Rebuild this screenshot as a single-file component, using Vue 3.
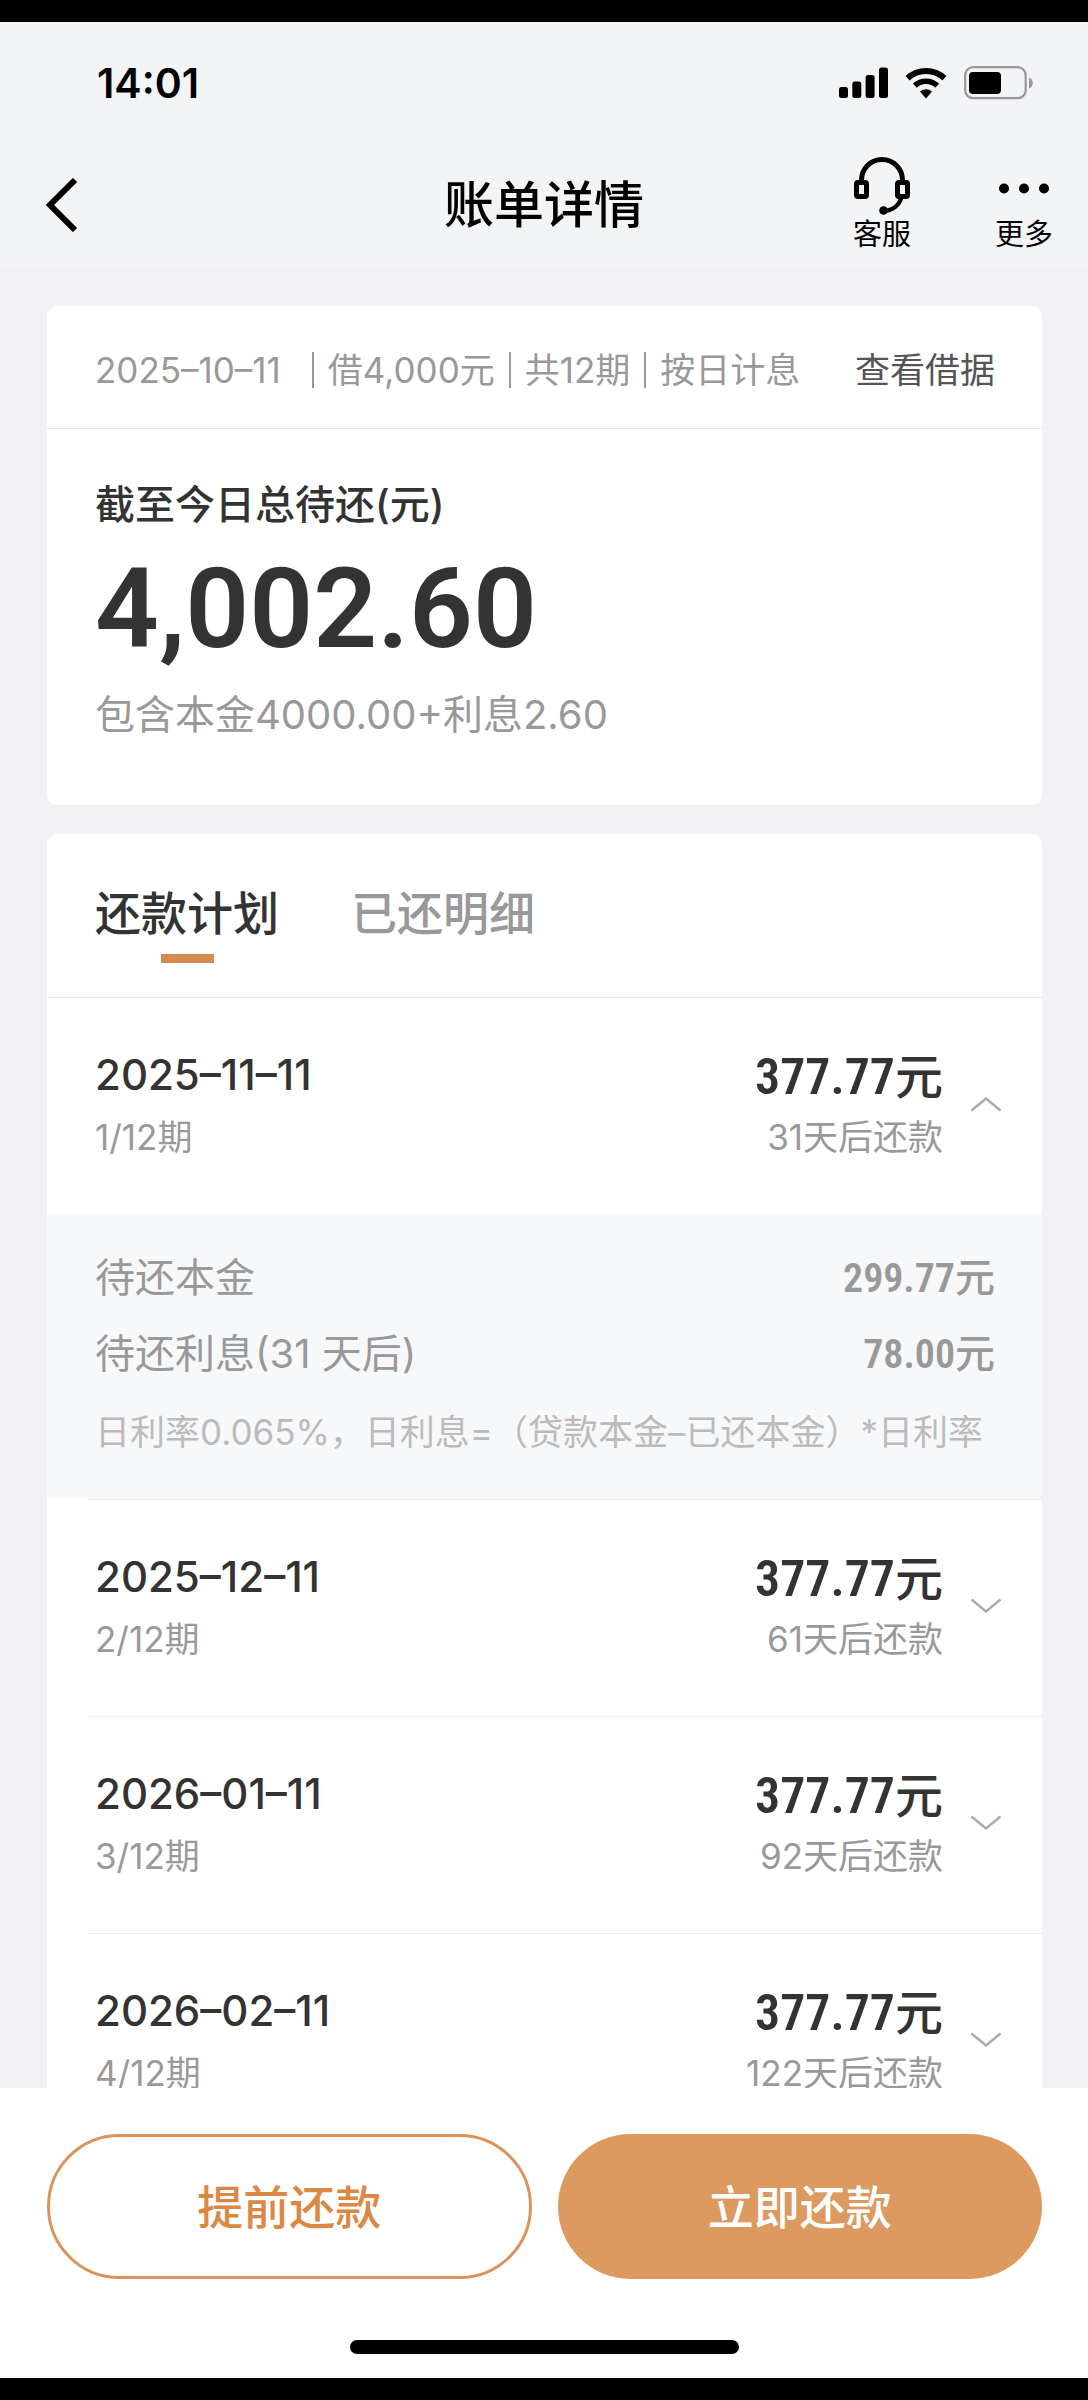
<script setup>
import { ref } from 'vue'

const tabs = ['还款计划', '已还明细']
const activeTab = ref(0)

const plans = ref([
  {
    date: '2025–11–11', term: '1/12期', amount: '377.77', due: '31天后还款', open: true,
    detail: {
      items: [
        { label: '待还本金', amount: '299.77' },
        { label: '待还利息(31 天后)', amount: '78.00' },
      ],
      note: '日利率0.065%，日利息=（贷款本金–已还本金）*日利率',
    },
  },
  { date: '2025–12–11', term: '2/12期', amount: '377.77', due: '61天后还款', open: false },
  { date: '2026–01–11', term: '3/12期', amount: '377.77', due: '92天后还款', open: false },
  { date: '2026–02–11', term: '4/12期', amount: '377.77', due: '122天后还款', open: false },
])
</script>

<template>
  <div class="screen">
    <header class="top">
      <div class="status">
        <span class="time">14:01</span>
        <div class="status-icons">
          <svg width="49" height="32" viewBox="0 0 49 32" aria-hidden="true">
            <rect x="0" y="20" width="9" height="11" rx="2.5" />
            <rect x="13.3" y="14.5" width="9" height="16.5" rx="2.5" />
            <rect x="26.6" y="8" width="9" height="23" rx="2.5" />
            <rect x="40" y="0.5" width="9" height="30.5" rx="2.5" />
          </svg>
          <svg width="42" height="32" viewBox="0 0 42 32" aria-hidden="true">
            <path d="M2.6 11.2a27 27 0 0 1 36.800 0" fill="none" stroke="#000" stroke-width="6" />
            <path d="M9.800 18.600a16.500 16.500 0 0 1 22.400 0" fill="none" stroke="#000" stroke-width="5.600" />
            <path d="M15 24.500a9.500 9.500 0 0 1 12 0L21 31.500z" />
          </svg>
          <svg width="70" height="34" viewBox="0 0 70 34" aria-hidden="true">
            <rect x="1.200" y="1.200" width="60.500" height="31" rx="8" fill="none" stroke="#98989a" stroke-width="2.200" />
            <rect x="5" y="6" width="32" height="22" rx="4" />
            <path d="M65 11.500c5 1.500 5 9.500 0 11z" fill="#98989a" />
          </svg>
        </div>
      </div>
      <nav class="nav">
        <button class="back" type="button" aria-label="返回">
          <svg width="32" height="54" viewBox="0 0 32 54" aria-hidden="true">
            <path d="M29 2 4 27l25 25" fill="none" stroke="#000" stroke-width="6" />
          </svg>
        </button>
        <h1>账单详情</h1>
        <div class="tools">
          <button class="tool" type="button">
            <svg width="58" height="58" viewBox="0 0 58 58" fill="none" stroke="#000" stroke-width="5" aria-hidden="true">
              <path d="M8.500 25v-2a20.500 20.500 0 0 1 41 0v2" />
              <rect x="3.500" y="25.500" width="10" height="14" rx="1.500" />
              <rect x="44.500" y="25.500" width="10" height="14" rx="1.500" />
              <path d="M48.500 40c-2 7.500-8 13.500-18 14" stroke-width="4.500" />
              <circle cx="30.500" cy="53.500" r="4.300" fill="#000" stroke="none" />
            </svg>
            <span>客服</span>
          </button>
          <button class="tool" type="button">
            <svg width="58" height="58" viewBox="0 0 58 58" aria-hidden="true">
              <circle cx="9" cy="31.500" r="5" />
              <circle cx="29" cy="31.500" r="5" />
              <circle cx="49" cy="31.500" r="5" />
            </svg>
            <span>更多</span>
          </button>
        </div>
      </nav>
    </header>

    <main class="content">
      <section class="card">
        <div class="loan">
          <p class="loan-meta">
            <span class="loan-date">2025–10–11</span><i></i><span>借4,000元</span><i></i><span>共12期</span><i></i><span>按日计息</span>
          </p>
          <a href="#">查看借据</a>
        </div>
        <div class="summary">
          <h2>截至今日总待还(元)</h2>
          <p class="total">4,002.60</p>
          <p class="parts">包含本金4000.00+利息2.60</p>
        </div>
      </section>

      <section class="card">
        <div class="tabs" role="tablist">
          <button
            v-for="(tab, i) in tabs"
            :key="tab"
            type="button"
            role="tab"
            class="tab"
            :class="{ active: activeTab === i }"
            :aria-selected="activeTab === i"
            @click="activeTab = i"
          >{{ tab }}</button>
        </div>
        <ul class="plans">
          <li v-for="plan in plans" :key="plan.date">
            <button class="plan" type="button" :aria-expanded="plan.open" @click="plan.open = !plan.open">
              <span class="col">
                <span class="date">{{ plan.date }}</span>
                <span class="sub">{{ plan.term }}</span>
              </span>
              <span class="col end">
                <span class="money"><b>{{ plan.amount }}</b>元</span>
                <span class="sub">{{ plan.due }}</span>
              </span>
              <svg class="chevron" :class="{ up: plan.open }" width="32" height="16" viewBox="0 0 32 16" aria-hidden="true">
                <path d="M1.500 1.500 16 13.500l14.500-12" fill="none" stroke="#aaa" stroke-width="2.400" />
              </svg>
            </button>
            <div v-if="plan.open && plan.detail" class="detail">
              <div v-for="item in plan.detail.items" :key="item.label" class="item">
                <span>{{ item.label }}</span>
                <span class="item-money"><b>{{ item.amount }}</b>元</span>
              </div>
              <p class="note">{{ plan.detail.note }}</p>
            </div>
          </li>
        </ul>
      </section>
    </main>

    <footer class="actions">
      <div class="buttons">
        <button class="btn outline" type="button">提前还款</button>
        <button class="btn solid" type="button">立即还款</button>
      </div>
      <div class="home"></div>
    </footer>
  </div>
</template>

<style>
body {
  margin: 0;
  background: #000;
}
</style>

<style scoped>
.screen {
  box-sizing: border-box;
  display: flex;
  flex-direction: column;
  height: 100vh;
  border-top: 22px solid #000;
  border-bottom: 22px solid #000;
  background: #f2f2f5;
  color: #333;
  font-family: Inter, "Noto Sans CJK SC", sans-serif;
}

h1, h2, p, ul {
  margin: 0;
  padding: 0;
}

button {
  margin: 0;
  padding: 0;
  border: 0;
  background: none;
  color: inherit;
  font: inherit;
  cursor: pointer;
}

svg {
  display: block;
  flex: none;
}

.top {
  flex: none;
  background: #f3f4f6;
  color: #000;
}

.status {
  display: flex;
  align-items: center;
  justify-content: space-between;
  height: 121px;
  padding: 0 54px 0 97px;
}

.time {
  font-size: 41px;
  font-weight: 600;
  line-height: 48px;
}

.status-icons {
  display: flex;
  align-items: center;
  gap: 17px;
}

.nav {
  display: grid;
  grid-template-columns: 1fr auto 1fr;
  align-items: center;
  height: 123px;
  padding: 0 35px;
}

.back {
  justify-self: start;
  margin-left: 11px;
}

h1 {
  font-size: 50px;
  font-weight: 500;
  line-height: 64px;
}

.tools {
  display: flex;
  justify-content: flex-end;
  gap: 84px;
}

.tool {
  display: flex;
  flex-direction: column;
  align-items: center;
  gap: 2px;
  font-size: 29px;
  line-height: 36px;
}

.content {
  flex: 1;
  min-height: 0;
  overflow: hidden;
  padding: 40px 46px 0 47px;
}

.card {
  overflow: hidden;
  border-radius: 10px;
  background: #fff;
}

.card + .card {
  margin-top: 29px;
}

.loan {
  box-sizing: border-box;
  display: flex;
  align-items: center;
  justify-content: space-between;
  height: 123px;
  padding: 5px 47px 0 48px;
  border-bottom: 1px solid #e6e6e6;
  font-size: 35px;
  line-height: 48px;
}

.loan-meta {
  display: flex;
  align-items: center;
  gap: 14px;
  color: #999;
}

.loan-date {
  margin-right: 17px;
}

.loan-meta i {
  width: 2px;
  height: 36px;
  background: #999;
}

.loan a {
  color: #555;
  text-decoration: none;
}

.summary {
  padding: 48px 48px 62px;
}

h2 {
  font-size: 40px;
  font-weight: 500;
  line-height: 56px;
}

.total {
  margin: 16px 0 18px;
  font-family: Roboto, sans-serif;
  font-size: 112px;
  font-weight: 600;
  line-height: 120px;
}

.parts {
  color: #999;
  font-size: 40px;
  line-height: 56px;
}

.tabs {
  display: flex;
  gap: 72px;
  padding: 49px 48px 34px;
  border-bottom: 1px solid #e8e8e8;
}

.tab {
  display: flex;
  flex-direction: column;
  align-items: center;
  color: #999;
  font-size: 46px;
  font-weight: 500;
  line-height: 60px;
}

.tab::after {
  content: "";
  width: 53px;
  height: 9px;
  margin-top: 11px;
}

.tab.active {
  color: #333;
}

.tab.active::after {
  background: #d58a52;
}

.plans {
  list-style: none;
}

.plan {
  display: flex;
  align-items: center;
  width: 100%;
  padding: 48px 40px 53px 48px;
}

.plans li + li .plan {
  width: calc(100% - 41px);
  margin-left: 41px;
  padding-left: 7px;
  border-top: 1px solid #ececee;
}

.col {
  display: flex;
  flex-direction: column;
  gap: 5px;
  text-align: left;
}

.end {
  margin-left: auto;
  text-align: right;
}

.date {
  margin-bottom: 4px;
  font-size: 42px;
  font-weight: 500;
  line-height: 58px;
}

.sub {
  color: #999;
  font-size: 35px;
  line-height: 48px;
}

.money {
  font-size: 48px;
  font-weight: 500;
  line-height: 62px;
}

.money b,
.item-money b {
  font-family: "Roboto Condensed", Roboto, sans-serif;
  font-weight: 600;
}

.money b {
  font-size: 50px;
}

.chevron {
  margin-left: 27px;
}

.chevron.up {
  transform: rotate(180deg);
}

.detail {
  padding: 36px 47px 43px 48px;
  background: #f7f8fa;
  color: #999;
}

.item {
  display: flex;
  justify-content: space-between;
  margin-bottom: 19px;
  font-size: 40px;
  line-height: 56px;
}

.item-money {
  font-weight: 500;
}

.note {
  margin-top: 25px;
  color: #bbb;
  font-size: 35px;
  line-height: 48px;
}

.actions {
  flex: none;
  padding: 46px 46px 24px 47px;
  background: #fff;
}

.buttons {
  display: flex;
  gap: 26px;
}

.btn {
  box-sizing: border-box;
  flex: 1 1 50%;
  height: 145px;
  border-radius: 73px;
  font-size: 46px;
  font-weight: 500;
  line-height: 60px;
}

.outline {
  border: 3px solid #dc9259;
  color: #db8844;
}

.solid {
  background: #dc9a60;
  color: #fff;
}

.home {
  width: 39%;
  height: 14px;
  margin: 61px auto 0;
  border-radius: 7px;
  background: #000;
}
</style>
